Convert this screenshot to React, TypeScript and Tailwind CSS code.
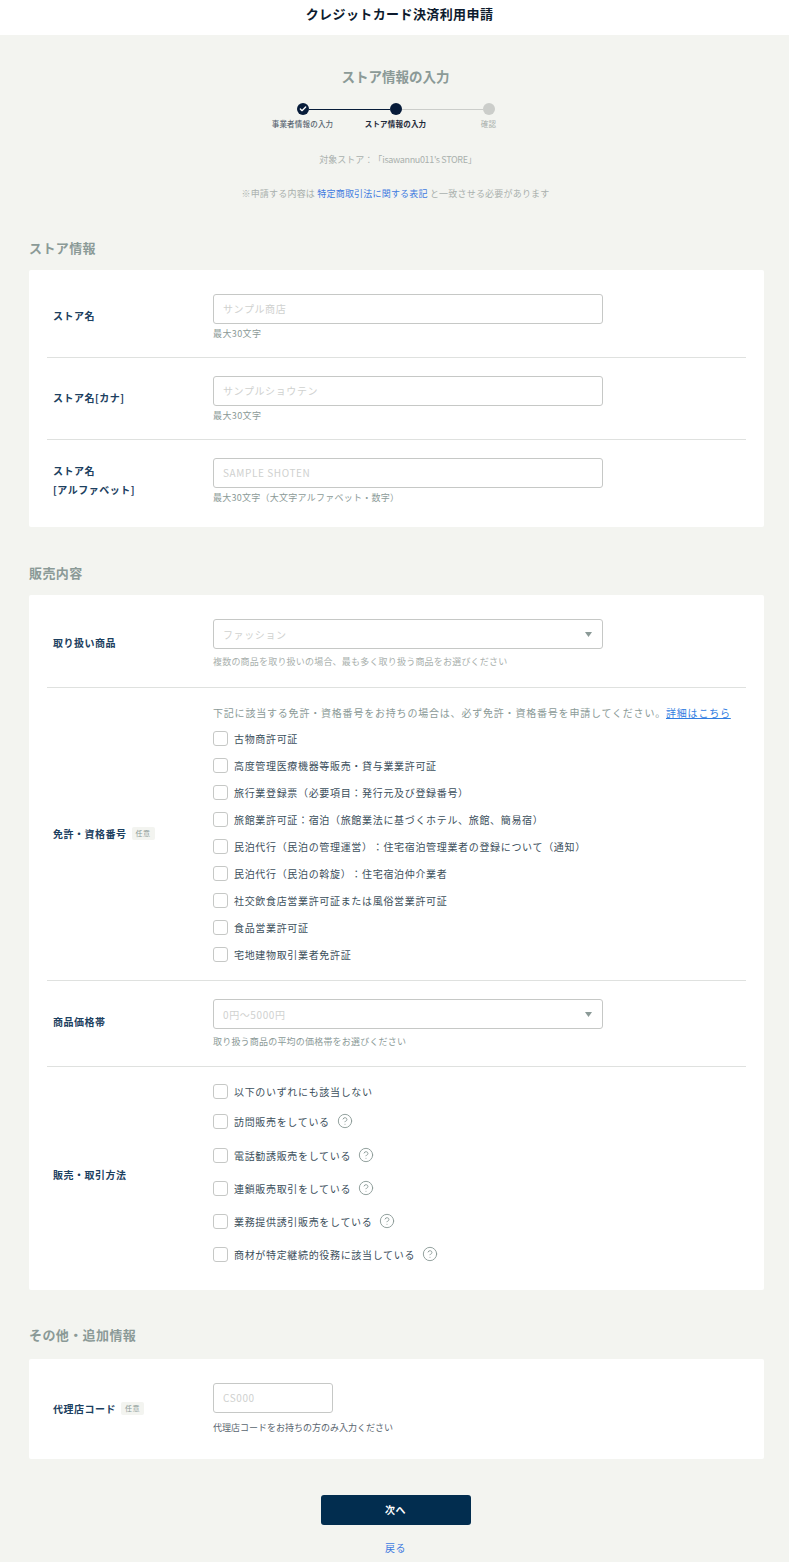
import type { ReactNode } from "react";
import { Check, CircleHelp } from "lucide-react";

const licenses = [
  "古物商許可証",
  "高度管理医療機器等販売・貸与業業許可証",
  "旅行業登録票（必要項目：発行元及び登録番号）",
  "旅館業許可証：宿泊（旅館業法に基づくホテル、旅館、簡易宿）",
  "民泊代行（民泊の管理運営）：住宅宿泊管理業者の登録について（通知）",
  "民泊代行（民泊の斡旋）：住宅宿泊仲介業者",
  "社交飲食店営業許可証または風俗営業許可証",
  "食品営業許可証",
  "宅地建物取引業者免許証",
];

const salesMethods = [
  { label: "訪問販売をしている", className: "mt-[15px]" },
  { label: "電話勧誘販売をしている", className: "mt-[19px]" },
  { label: "連鎖販売取引をしている", className: "mt-[18px]" },
  { label: "業務提供誘引販売をしている", className: "mt-[18px]" },
  { label: "商材が特定継続的役務に該当している", className: "mt-[18px]" },
];

function SectionTitle({ children }: { children: ReactNode }) {
  return (
    <h2 className="mx-[29px] h-[20px] text-[13px] leading-[20px] font-bold tracking-[0.4px] text-[#8b9a97]">
      {children}
    </h2>
  );
}

function Card({ className, children }: { className?: string; children: ReactNode }) {
  return (
    <section className={`mr-[25px] ml-[29px] rounded-[2px] bg-white px-[18px] py-[6px] ${className ?? ""}`}>
      {children}
    </section>
  );
}

type RowProps = { label: ReactNode; optional?: boolean; labelPad?: string; children: ReactNode };

function Row({ label, optional, labelPad = "pb-[2px]", children }: RowProps) {
  return (
    <div className="flex items-center border-t border-[#dfe1df] py-[18px] first:border-t-0">
      <div className={`flex w-[166px] shrink-0 items-center pl-[6px] text-[10px] leading-[19px] font-bold tracking-[0.5px] text-[#1c4060] ${labelPad}`}>
        <div>{label}</div>
        {optional && (
          <span className="ml-[5px] rounded-[2px] bg-[#f3f4f0] px-[4px] text-[7px] leading-[13px] font-normal text-[#8b9a97]">
            任意
          </span>
        )}
      </div>
      <div className="min-w-0 flex-1">{children}</div>
    </div>
  );
}

function TextField({ placeholder, className }: { placeholder: string; className?: string }) {
  return (
    <input
      readOnly
      placeholder={placeholder}
      className={`block h-[30px] rounded-[3px] border border-[#c6c8c6] bg-white px-[9px] pb-[2px] text-[10px] tracking-[0.6px] outline-none placeholder:text-[#cfd1cf] ${className ?? "w-[390px]"}`}
    />
  );
}

function SelectField({ value }: { value: string }) {
  return (
    <div className="flex h-[30px] w-[390px] items-center justify-between rounded-[3px] border border-[#c6c8c6] bg-white pr-[10px] pl-[9px] text-[10px] tracking-[0.6px] text-[#cfd1cf]">
      <span>{value}</span>
      <svg width="7" height="5" viewBox="0 0 7 5" aria-hidden>
        <path d="M0 0h7L3.5 5z" fill="#8b9a97" />
      </svg>
    </div>
  );
}

function Help({ className, children }: { className: string; children: ReactNode }) {
  return <p className={`text-[9px] leading-[11px] ${className}`}>{children}</p>;
}

function CheckItem({ label, className, help }: { label: string; className?: string; help?: boolean }) {
  return (
    <label className={`flex h-[15px] items-center text-[10px] tracking-[0.67px] text-[#3c4f5c] ${className ?? ""}`}>
      <input
        type="checkbox"
        className="mr-[6px] size-[15px] shrink-0 appearance-none rounded-[3px] border border-[#c6c8c6] bg-white"
      />
      <span className="whitespace-nowrap">{label}</span>
      {help && <CircleHelp className="relative -top-[1px] ml-[7px] size-[16px] text-[#8b9a97]" strokeWidth={1.4} aria-hidden />}
    </label>
  );
}

function Stepper() {
  return (
    <div className="mx-auto mt-[17px] w-[279px]">
      <div className="flex items-center justify-center">
        <span className="flex size-[12px] items-center justify-center rounded-full bg-[#071c3a]">
          <Check className="size-[8px] text-white" strokeWidth={4} aria-hidden />
        </span>
        <span className="h-px w-[81px] bg-[#071c3a]" />
        <span className="size-[12px] rounded-full bg-[#071c3a]" />
        <span className="h-px w-[81px] bg-[#cbcdca]" />
        <span className="size-[12px] rounded-full bg-[#cbcdca]" />
      </div>
      <div className="mt-[4px] grid grid-cols-3 text-center text-[7.5px] leading-[10px] tracking-[0.2px]">
        <span className="font-medium text-[#5a6670]">事業者情報の入力</span>
        <span className="font-bold text-[#1e2a3a]">ストア情報の入力</span>
        <span className="text-[#a9b0ad]">確認</span>
      </div>
    </div>
  );
}

export default function App() {
  return (
    <div className="min-h-[1562px] w-[789px] bg-[#f3f4f0] font-['Noto_Sans_CJK_JP',sans-serif] [text-spacing-trim:space-all]">
      <header className="flex h-[35px] items-start justify-center bg-white pt-[3px] pl-[10px] text-[13px] leading-[22px] font-bold tracking-[0.4px] text-[#0d1b2e]">
        クレジットカード決済利用申請
      </header>

      <div className="pl-[2px]">
        <h1 className="mt-[31px] text-center text-[13.5px] leading-[20px] font-bold text-[#8b9a97]">ストア情報の入力</h1>
        <Stepper />
        <p className="mt-[25px] pl-[5px] text-center text-[9px] leading-[12px] text-[#a9b0ad]">
          対象ストア：「<span className="tracking-[-0.35px]">isawannu011's STORE</span>」
        </p>
        <p className="mt-[22px] text-center text-[9px] leading-[12px] tracking-[0.2px] text-[#a9b0ad]">
          ※申請する内容は <a className="text-[#3f7be0]">特定商取引法に関する表記</a> と一致させる必要があります
        </p>
      </div>

      <div className="mt-[38px]">
        <SectionTitle>ストア情報</SectionTitle>
        <Card className="mt-[12px]">
          <Row label="ストア名">
            <TextField placeholder="サンプル商店" />
            <Help className="mt-[4px] tracking-[0.4px] text-[#8b9a97]">最大30文字</Help>
          </Row>
          <Row label="ストア名[カナ]">
            <TextField placeholder="サンプルショウテン" />
            <Help className="mt-[4px] tracking-[0.4px] text-[#8b9a97]">最大30文字</Help>
          </Row>
          <Row
            label={
              <>
                ストア名
                <br />
                [アルファベット]
              </>
            }
          >
            <TextField placeholder="SAMPLE SHOTEN" />
            <Help className="mt-[4px] tracking-[0.25px] text-[#8b9a97]">最大30文字（大文字アルファベット・数字）</Help>
          </Row>
        </Card>
      </div>

      <div className="mt-[36px]">
        <SectionTitle>販売内容</SectionTitle>
        <Card className="mt-[12px]">
          <Row label="取り扱い商品" labelPad="pb-[4px]">
            <SelectField value="ファッション" />
            <Help className="mt-[7px] mb-[2px] tracking-[0.2px] text-[#a9b0ad]">複数の商品を取り扱いの場合、最も多く取り扱う商品をお選びください</Help>
          </Row>
          <Row label="免許・資格番号" optional>
            <p className="text-[10px] leading-[14px] tracking-[0.8px] whitespace-nowrap text-[#8b9a97]">
              下記に該当する免許・資格番号をお持ちの場合は、必ず免許・資格番号を申請してください。
              <a className="text-[#2f7de1] underline">詳細はこちら</a>
            </p>
            <div className="mt-[11px] flex flex-col gap-[12px]">
              {licenses.map((item) => (
                <CheckItem key={item} label={item} />
              ))}
            </div>
          </Row>
          <Row label="商品価格帯" labelPad="pb-[4px]">
            <SelectField value="0円〜5000円" />
            <Help className="mt-[7px] mb-[1px] tracking-[0.2px] text-[#8b9a97]">取り扱う商品の平均の価格帯をお選びください</Help>
          </Row>
          <Row label="販売・取引方法">
            <CheckItem label="以下のいずれにも該当しない" className="-mt-[1px]" />
            {salesMethods.map((item) => (
              <CheckItem key={item.label} label={item.label} className={item.className} help />
            ))}
            <div className="h-[4px]" />
          </Row>
        </Card>
      </div>

      <div className="mt-[35px]">
        <SectionTitle>その他・追加情報</SectionTitle>
        <Card className="mt-[14px]">
          <Row label="代理店コード" optional>
            <TextField placeholder="CS000" className="w-[120px]" />
            <Help className="mt-[9px] mb-[2px] text-[#5a6670]">代理店コードをお持ちの方のみ入力ください</Help>
          </Row>
        </Card>
      </div>

      <div className="mt-[36px] flex flex-col items-center pl-[2px]">
        <button className="h-[30px] w-[150px] rounded-[3px] bg-[#022d4f] pb-[2px] text-[10px] font-bold tracking-[0.5px] text-white">次へ</button>
        <a className="mt-[15px] text-[10px] leading-[16px] tracking-[0.5px] text-[#3f7be0]">戻る</a>
      </div>
    </div>
  );
}
